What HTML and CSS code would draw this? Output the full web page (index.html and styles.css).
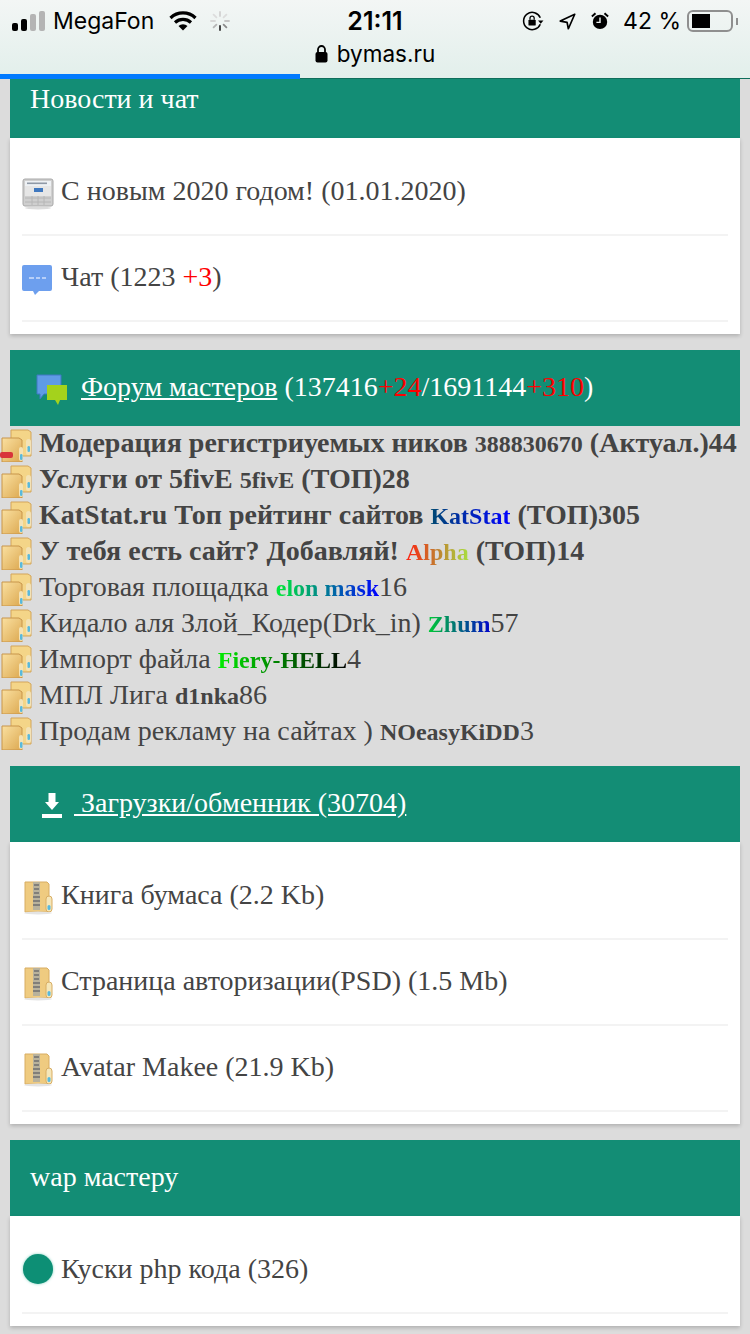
FILE: index.html
```html
<!DOCTYPE html>
<html lang="ru">
<head>
	<meta charset="UTF-8">
	<meta name="viewport" content="width=device-width, initial-scale=1.0">
	<title>bymas.ru</title>
	<link rel="stylesheet" href="styles.css">
</head>
<body>

	<svg class="defs" width="0" height="0">
		<defs>
			<linearGradient id="folderFill" x1="0" y1="0" x2="1" y2="1">
				<stop offset="0" stop-color="#fae0a0"/>
				<stop offset="1" stop-color="#dca850"/>
			</linearGradient>
			<symbol id="folder" viewBox="0 0 32 36">
				<path d="M11 4h17l3 2v24H11z" fill="#f4d588" stroke="#d3a55a" stroke-width="1"/>
				<path d="M2 12h17l3 2v22H2z" fill="url(#folderFill)" stroke="#c8954a" stroke-width="1"/>
				<rect x="26" y="13" width="5" height="16" rx="2.5" fill="#f3e2b6"/>
				<rect x="27.5" y="20" width="2.5" height="6" rx="1.2" fill="#58b9dc"/>
				<rect x="19" y="21" width="4" height="14" rx="2" fill="#f3e2b6"/>
				<rect x="20" y="28" width="2.5" height="6" rx="1.2" fill="#58b9dc"/>
			</symbol>
			<symbol id="zip" viewBox="0 0 32 34">
				<path d="M3 1h22l2 2v28H3z" fill="#efcb80" stroke="#d8ad63" stroke-width="1"/>
				<path d="M11 1h7v28h-7z" fill="#b9b29c"/>
				<path d="M12 4h5M12 8h5M12 12h5M11 16h7M11 20h7M11 24h7" stroke="#6f6f6f" stroke-width="1.6"/>
				<rect x="24" y="15" width="6" height="16" rx="3" fill="#f5e6b8" stroke="#d8ad63" stroke-width="1"/>
				<rect x="25.5" y="24" width="3" height="5" rx="1.5" fill="#58b9dc"/>
				<ellipse cx="16" cy="32" rx="14" ry="1.5" fill="#e4e4e4"/>
			</symbol>
		</defs>
	</svg>

	<div class="top-bar">
		<div class="status">
			<div class="status-left">
				<span class="signal"><i class="on s1"></i><i class="on s2"></i><i class="s3"></i><i class="s4"></i></span>
				<span class="carrier">MegaFon</span>
				<svg class="wifi" width="28" height="20" viewBox="0 0 28 20">
					<path d="M1.5 7 A18 18 0 0 1 26.5 7" fill="none" stroke="#000" stroke-width="3.2"/>
					<path d="M6 11.5 A12 12 0 0 1 22 11.5" fill="none" stroke="#000" stroke-width="3.2"/>
					<path d="M14 19.5 L9.5 15 A6.5 6.5 0 0 1 18.5 15 Z" fill="#000"/>
				</svg>
				<svg class="spinner" width="20" height="20" viewBox="0 0 20 20" stroke-width="1.8" stroke-linecap="round">
					<path d="M10 1v4" stroke="#d2d2d2"/>
					<path d="M16.4 3.6l-2.8 2.8" stroke="#dcdcdc"/>
					<path d="M19 10h-4" stroke="#c4c4c4"/>
					<path d="M16.4 16.4l-2.8-2.8" stroke="#8a8a8a"/>
					<path d="M10 19v-4" stroke="#333"/>
					<path d="M3.6 16.4l2.8-2.8" stroke="#b5b5b5"/>
					<path d="M1 10h4" stroke="#d6d6d6"/>
					<path d="M3.6 3.6l2.8 2.8" stroke="#dcdcdc"/>
				</svg>
			</div>
			<div class="clock">21:11</div>
			<div class="status-right">
				<svg class="rotation" width="22" height="20" viewBox="0 0 24 22">
					<path d="M20 14.5 A9.5 9.5 0 1 1 20 7.5" fill="none" stroke="#000" stroke-width="1.7"/>
					<path d="M17.5 10.5h6l-3 3.5z" fill="#000"/>
					<rect x="7" y="9.5" width="8" height="6.5" rx="1" fill="#000"/>
					<path d="M8.7 9.5V8a2.3 2.3 0 0 1 4.6 0v1.5" fill="none" stroke="#000" stroke-width="1.4"/>
				</svg>
				<svg class="arrow" width="17" height="17" viewBox="0 0 20 20">
					<path d="M18.5 1.5 L1.5 9.5 L9.5 11 L11 18.5 Z" fill="none" stroke="#000" stroke-width="2" stroke-linejoin="round"/>
				</svg>
				<svg class="alarm" width="18" height="18" viewBox="0 0 20 20">
					<circle cx="10" cy="11" r="8" fill="#000"/>
					<path d="M10 6v5.5H6" fill="none" stroke="#eef3f2" stroke-width="1.6"/>
					<path d="M1 5 L5 1.5M19 5 L15 1.5" stroke="#000" stroke-width="2.2"/>
				</svg>
				<span class="percent">42 %</span>
				<span class="battery"><i></i></span>
				<span class="battery-tip"></span>
			</div>
		</div>
		<div class="address">
			<svg width="13" height="18" viewBox="0 0 13 18">
				<rect x="0.5" y="7" width="12" height="10.5" rx="2" fill="#000"/>
				<path d="M3 7.5V4.5a3.5 3.5 0 0 1 7 0v3" fill="none" stroke="#000" stroke-width="1.8"/>
			</svg>
			<span>bymas.ru</span>
		</div>
		<div class="progress"></div>
	</div>

	<div class="page">

		<section class="block">
			<h2 class="head head-first">Новости и чат</h2>
			<ul class="list">
				<li>
					<svg class="ico" width="32" height="32" viewBox="0 0 32 32">
						<rect x="1" y="1" width="30" height="27" rx="2" fill="#cfcfcf" stroke="#a8a8a8"/>
						<rect x="3" y="3" width="26" height="5" fill="#eef1f4"/>
						<rect x="5" y="4.5" width="20" height="1.6" fill="#8f99a6"/>
						<rect x="3" y="8" width="26" height="10" fill="#e6e6e6"/>
						<rect x="12" y="10" width="9" height="4" fill="#3f78bf"/>
						<path d="M3 20h26M3 24h26M10 18v9M16 18v9M22 18v9" stroke="#b6b6b6"/>
						<ellipse cx="16" cy="30" rx="13" ry="1.5" fill="#dcdcdc"/>
					</svg>
					<span>С новым 2020 годом! (01.01.2020)</span>
				</li>
				<li>
					<svg class="ico" width="32" height="32" viewBox="0 0 32 32">
						<path d="M2 1h26a2 2 0 0 1 2 2v22a2 2 0 0 1-2 2H17l-4 4-2-4H2a2 2 0 0 1-2-2V3a2 2 0 0 1 2-2z" fill="#6d9fee"/>
						<path d="M7 14h5M14 14h4M20 14h4" stroke="#cfe0fb" stroke-width="1.5"/>
					</svg>
					<span>Чат (1223 <span class="red">+3</span>)</span>
				</li>
			</ul>
		</section>

		<section class="block">
			<h2 class="head head-icon">
				<svg class="head-ico" width="32" height="32" viewBox="0 0 32 32">
					<path d="M1 1h24v19H8l-4 5v-5H1z" fill="#5f9be6" stroke="#3f78c4"/>
					<path d="M11 11h20v15h-7l-2 5-3-5h-8z" fill="#a4d21c"/>
				</svg><a href="#">Форум мастеров</a> (137416<span class="red">+24</span>/1691144<span class="red">+310</span>)
			</h2>
			<div class="forum">
				<div class="topic strong">
					<span class="folder">
						<svg width="32" height="36"><use href="#folder"/></svg>
						<i class="minus"></i>
					</span>
					<span class="topic-text">Модерация регистриуемых ников <span class="nick">388830670</span> (Актуал.)44</span>
				</div>
				<div class="topic strong">
					<span class="folder"><svg width="32" height="36"><use href="#folder"/></svg></span>
					<span class="topic-text">Услуги от 5fivE <span class="nick">5fivE</span> (ТОП)28</span>
				</div>
				<div class="topic strong">
					<span class="folder"><svg width="32" height="36"><use href="#folder"/></svg></span>
					<span class="topic-text">KatStat.ru Топ рейтинг сайтов <span class="nick nick-katstat">KatStat</span> (ТОП)305</span>
				</div>
				<div class="topic strong">
					<span class="folder"><svg width="32" height="36"><use href="#folder"/></svg></span>
					<span class="topic-text">У тебя есть сайт? Добавляй! <span class="nick nick-alpha">Alpha</span> (ТОП)14</span>
				</div>
				<div class="topic">
					<span class="folder"><svg width="32" height="36"><use href="#folder"/></svg></span>
					<span class="topic-text">Торговая площадка <span class="nick nick-elon">elon mask</span>16</span>
				</div>
				<div class="topic">
					<span class="folder"><svg width="32" height="36"><use href="#folder"/></svg></span>
					<span class="topic-text">Кидало аля Злой_Кодер(Drk_in) <span class="nick nick-zhum">Zhum</span>57</span>
				</div>
				<div class="topic">
					<span class="folder"><svg width="32" height="36"><use href="#folder"/></svg></span>
					<span class="topic-text">Импорт файла <span class="nick nick-fiery">Fiery-HELL</span>4</span>
				</div>
				<div class="topic">
					<span class="folder"><svg width="32" height="36"><use href="#folder"/></svg></span>
					<span class="topic-text">МПЛ Лига <span class="nick">d1nka</span>86</span>
				</div>
				<div class="topic">
					<span class="folder"><svg width="32" height="36"><use href="#folder"/></svg></span>
					<span class="topic-text">Продам рекламу на сайтах ) <span class="nick">NOeasyKiDD</span>3</span>
				</div>
			</div>
		</section>

		<section class="block">
			<h2 class="head head-icon">
				<svg class="head-ico-small" width="20" height="25" viewBox="0 0 20 25">
					<path d="M6.500 0h7v9h3.500l-7 8-7-8h3.500z" fill="#fff"/>
					<rect x="0" y="21" width="20" height="4" fill="#fff"/>
				</svg><a href="#">&nbsp;Загрузки/обменник (30704)</a>
			</h2>
			<ul class="list">
				<li><svg class="ico" width="32" height="34"><use href="#zip"/></svg><span>Книга бумаса (2.2 Kb)</span></li>
				<li><svg class="ico" width="32" height="34"><use href="#zip"/></svg><span>Страница авторизации(PSD) (1.5 Mb)</span></li>
				<li><svg class="ico" width="32" height="34"><use href="#zip"/></svg><span>Avatar Makee (21.9 Kb)</span></li>
			</ul>
		</section>

		<section class="block">
			<h2 class="head">wap мастеру</h2>
			<ul class="list">
				<li><span class="dot"></span><span>Куски php кода (326)</span></li>
			</ul>
		</section>

	</div>

</body>
</html>
```

FILE: styles.css
```css
html, body {
	margin: 0;
	padding: 0;
	height: 1334px;
	overflow: hidden;
}
body {
	background-color: #dcdcdc;
	color: #444444;
	font-family: "Liberation Serif", serif;
	font-size: 28px;
}
a {
	color: #ffffff;
}
.red {
	color: #ff0000;
}
.defs {
	display: block;
	height: 0;
}

/* browser bar */
.top-bar {
	position: relative;
	height: 79px;
	background: linear-gradient(#f3f6f5, #e2efeb);
	border-bottom: 1px solid #0e6e5b;
	box-sizing: border-box;
	color: #000000;
	font-family: "Inter", "Liberation Sans", sans-serif;
}
.status {
	display: grid;
	grid-template-columns: 1fr auto 1fr;
	align-items: center;
	height: 42px;
}
.status-left, .status-right {
	display: flex;
	align-items: center;
}
.status-left {
	padding-left: 12px;
}
.status-right {
	justify-content: flex-end;
	padding-right: 12px;
}
.signal {
	display: flex;
	align-items: flex-end;
	gap: 3px;
	height: 20px;
	margin-right: 8px;
}
.signal i {
	display: block;
	width: 6px;
	border-radius: 2px;
	background: #b4b4b4;
}
.signal .on {
	background: #000000;
}
.s1 { height: 8px; }
.s2 { height: 12px; }
.s3 { height: 17px; }
.s4 { height: 20px; }
.carrier {
	font-size: 23px;
	margin-right: 15px;
}
.spinner {
	margin-left: 13px;
}
.clock {
	font-size: 25px;
	font-weight: 600;
}
.arrow {
	margin-left: 15px;
}
.alarm {
	margin-left: 15px;
}
.percent {
	font-size: 23px;
	margin-left: 14px;
}
.battery {
	display: block;
	width: 36px;
	height: 14px;
	border: 2px solid #8f8f8f;
	border-radius: 6px;
	padding: 2px 3px;
	margin-left: 6px;
}
.battery i {
	display: block;
	width: 18px;
	height: 14px;
	background: #000000;
}
.battery-tip {
	width: 2px;
	height: 7px;
	background: #8f8f8f;
	margin-left: 3px;
}
.address {
	display: flex;
	align-items: center;
	justify-content: center;
	gap: 9px;
	font-size: 22.5px;
	margin-top: -2px;
}
.progress {
	position: absolute;
	left: 0;
	bottom: -1px;
	width: 300px;
	height: 5px;
	background: #007aff;
}

/* page */
.page {
	padding: 0 10px;
}
.block {
	margin-bottom: 16px;
}
.head {
	margin: 0;
	height: 76px;
	line-height: 74px;
	padding: 0 20px;
	box-sizing: border-box;
	background-color: #138d75;
	color: #ffffff;
	font-size: 28px;
	font-weight: normal;
	white-space: nowrap;
}
.head-first {
	height: 59px;
	line-height: 40px;
}
.head-icon {
	padding-left: 26px;
}
.head-ico {
	vertical-align: middle;
	margin-right: 13px;
	filter: blur(0.4px);
}
.head-ico-small {
	vertical-align: middle;
	margin: 0 12px 0 6px;
	filter: blur(0.4px);
}
.list {
	list-style: none;
	margin: 0;
	padding: 12px 12px 12px;
	background: #ffffff;
	box-shadow: 0 2px 4px rgba(0, 0, 0, 0.2);
}
.list li {
	display: flex;
	align-items: center;
	gap: 7px;
	height: 86px;
	padding-bottom: 2px;
	box-sizing: border-box;
	border-bottom: 2px solid #f3f3f3;
}
.ico {
	flex: none;
	margin-top: 5px;
	filter: blur(0.4px);
}
.dot {
	display: block;
	flex: none;
	width: 30px;
	height: 30px;
	margin: 0 1px;
	border-radius: 50%;
	background: #0d8f75;
	box-shadow: 0 0 3px #7fd0bd;
}

/* forum topics */
.forum {
	margin: 0 -10px;
}
.topic {
	display: flex;
	align-items: center;
	gap: 7px;
	height: 36px;
	white-space: nowrap;
}
.topic-text {
	padding-bottom: 2px;
}
.strong {
	font-weight: bold;
}
.folder {
	position: relative;
	display: block;
	flex: none;
	width: 32px;
	height: 36px;
}
.folder svg {
	display: block;
	filter: blur(0.4px);
}
.minus {
	position: absolute;
	left: 0;
	top: 26px;
	width: 13px;
	height: 6px;
	border-radius: 2px;
	background: #d8343a;
}
.nick {
	font-weight: bold;
	font-size: 24px;
}
.nick-katstat, .nick-alpha, .nick-elon, .nick-zhum, .nick-fiery {
	-webkit-background-clip: text;
	background-clip: text;
	color: transparent;
}
.nick-katstat {
	background-image: linear-gradient(90deg, #004a70, #0000ff);
}
.nick-alpha {
	background-image: linear-gradient(90deg, #ff2010, #c08030, #a8e040);
}
.nick-elon {
	background-image: linear-gradient(90deg, #00ee33, #0000ff);
}
.nick-zhum {
	background-image: linear-gradient(90deg, #00cc33, #0000cc);
}
.nick-fiery {
	background-image: linear-gradient(90deg, #00ee00, #000000);
}
```
